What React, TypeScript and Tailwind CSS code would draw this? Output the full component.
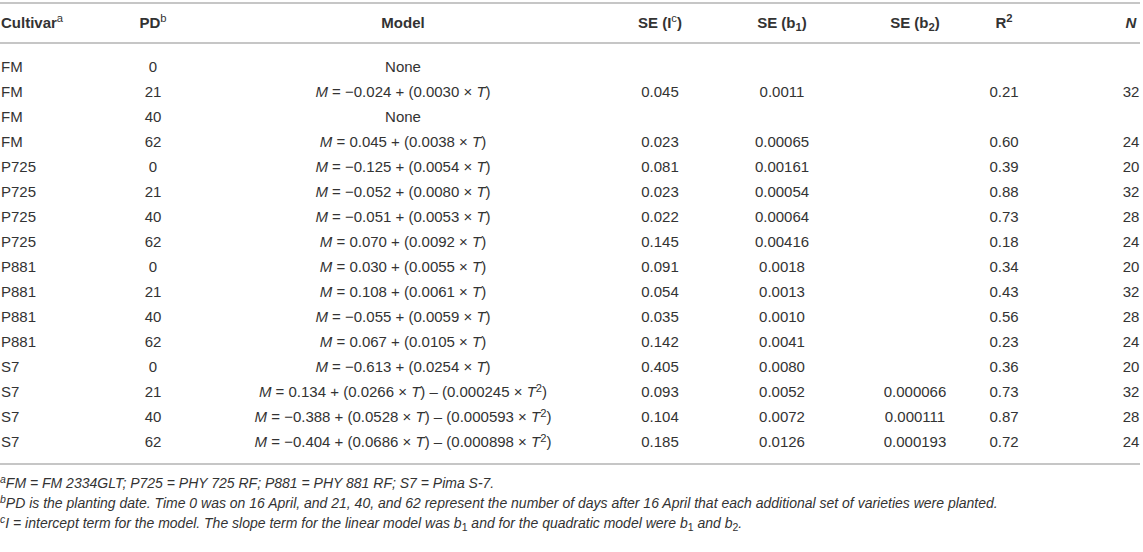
import type { ReactNode } from "react";

type Row = {
  cultivar: string;
  pd: string;
  model: ReactNode;
  seI?: string;
  seB1?: string;
  seB2?: string;
  r2?: string;
  n?: string;
};

function lin(a: string, b: string) {
  return (
    <>
      <i>M</i> = {a} + ({b} × <i>T</i>)
    </>
  );
}

function quad(a: string, b: string, c: string) {
  return (
    <>
      <i>M</i> = {a} + ({b} × <i>T</i>) – ({c} × <i>T</i>
      <sup>2</sup>)
    </>
  );
}

const rows: Row[] = [
  { cultivar: "FM", pd: "0", model: "None" },
  { cultivar: "FM", pd: "21", model: lin("−0.024", "0.0030"), seI: "0.045", seB1: "0.0011", r2: "0.21", n: "32" },
  { cultivar: "FM", pd: "40", model: "None" },
  { cultivar: "FM", pd: "62", model: lin("0.045", "0.0038"), seI: "0.023", seB1: "0.00065", r2: "0.60", n: "24" },
  { cultivar: "P725", pd: "0", model: lin("−0.125", "0.0054"), seI: "0.081", seB1: "0.00161", r2: "0.39", n: "20" },
  { cultivar: "P725", pd: "21", model: lin("−0.052", "0.0080"), seI: "0.023", seB1: "0.00054", r2: "0.88", n: "32" },
  { cultivar: "P725", pd: "40", model: lin("−0.051", "0.0053"), seI: "0.022", seB1: "0.00064", r2: "0.73", n: "28" },
  { cultivar: "P725", pd: "62", model: lin("0.070", "0.0092"), seI: "0.145", seB1: "0.00416", r2: "0.18", n: "24" },
  { cultivar: "P881", pd: "0", model: lin("0.030", "0.0055"), seI: "0.091", seB1: "0.0018", r2: "0.34", n: "20" },
  { cultivar: "P881", pd: "21", model: lin("0.108", "0.0061"), seI: "0.054", seB1: "0.0013", r2: "0.43", n: "32" },
  { cultivar: "P881", pd: "40", model: lin("−0.055", "0.0059"), seI: "0.035", seB1: "0.0010", r2: "0.56", n: "28" },
  { cultivar: "P881", pd: "62", model: lin("0.067", "0.0105"), seI: "0.142", seB1: "0.0041", r2: "0.23", n: "24" },
  { cultivar: "S7", pd: "0", model: lin("−0.613", "0.0254"), seI: "0.405", seB1: "0.0080", r2: "0.36", n: "20" },
  { cultivar: "S7", pd: "21", model: quad("0.134", "0.0266", "0.000245"), seI: "0.093", seB1: "0.0052", seB2: "0.000066", r2: "0.73", n: "32" },
  { cultivar: "S7", pd: "40", model: quad("−0.388", "0.0528", "0.000593"), seI: "0.104", seB1: "0.0072", seB2: "0.000111", r2: "0.87", n: "28" },
  { cultivar: "S7", pd: "62", model: quad("−0.404", "0.0686", "0.000898"), seI: "0.185", seB1: "0.0126", seB2: "0.000193", r2: "0.72", n: "24" },
];

const cols = "grid grid-cols-[110px_86px_414px_100px_144px_122px_56px_108px]";

export default function App() {
  return (
    <div className="w-[1143px] h-[552px] bg-white text-[#333] font-['Liberation_Sans',Arial,sans-serif]">
      <div className="w-[1140px] pt-[2px]">
        {/* header */}
        <div className={`${cols} h-[42px] items-center border-y-2 border-[#c6c6c6] text-[15px] font-bold`}>
          <div className="pl-px">
            Cultivar<sup className="font-normal">a</sup>
          </div>
          <div className="text-center">
            PD<sup className="font-normal">b</sup>
          </div>
          <div className="text-center">Model</div>
          <div className="text-center">
            SE (I<sup className="font-normal">c</sup>)
          </div>
          <div className="text-center">
            SE (b<sub>1</sub>)
          </div>
          <div className="text-center">
            SE (b<sub>2</sub>)
          </div>
          <div className="text-center">
            R<sup>2</sup>
          </div>
          <div className="pl-[90px] text-center italic">N</div>
        </div>

        {/* body */}
        <div className="pt-[11px] pb-[8px] border-b-2 border-[#c6c6c6] text-[15px]">
          {rows.map((r, i) => (
            <div key={i} className={`${cols} h-[25px] items-center`}>
              <div className="pl-px">{r.cultivar}</div>
              <div className="text-center">{r.pd}</div>
              <div className="text-center whitespace-nowrap">{r.model}</div>
              <div className="text-center">{r.seI}</div>
              <div className="text-center">{r.seB1}</div>
              <div className="text-center">{r.seB2}</div>
              <div className="text-center">{r.r2}</div>
              <div className="pl-[90px] text-center">{r.n}</div>
            </div>
          ))}
        </div>

        {/* footnotes */}
        <div className="mt-[8px] text-[14px] italic leading-[20px]">
          <p>
            <sup>a</sup>FM = FM 2334GLT; P725 = PHY 725 RF; P881 = PHY 881 RF; S7 = Pima S-7.
          </p>
          <p>
            <sup>b</sup>PD is the planting date. Time 0 was on 16 April, and 21, 40, and 62 represent the number of days
            after 16 April that each additional set of varieties were planted.
          </p>
          <p>
            <sup>c</sup>I = intercept term for the model. The slope term for the linear model was b<sub className="not-italic">1</sub> and
            for the quadratic model were b<sub className="not-italic">1</sub> and b<sub className="not-italic">2</sub>.
          </p>
        </div>
      </div>
    </div>
  );
}
